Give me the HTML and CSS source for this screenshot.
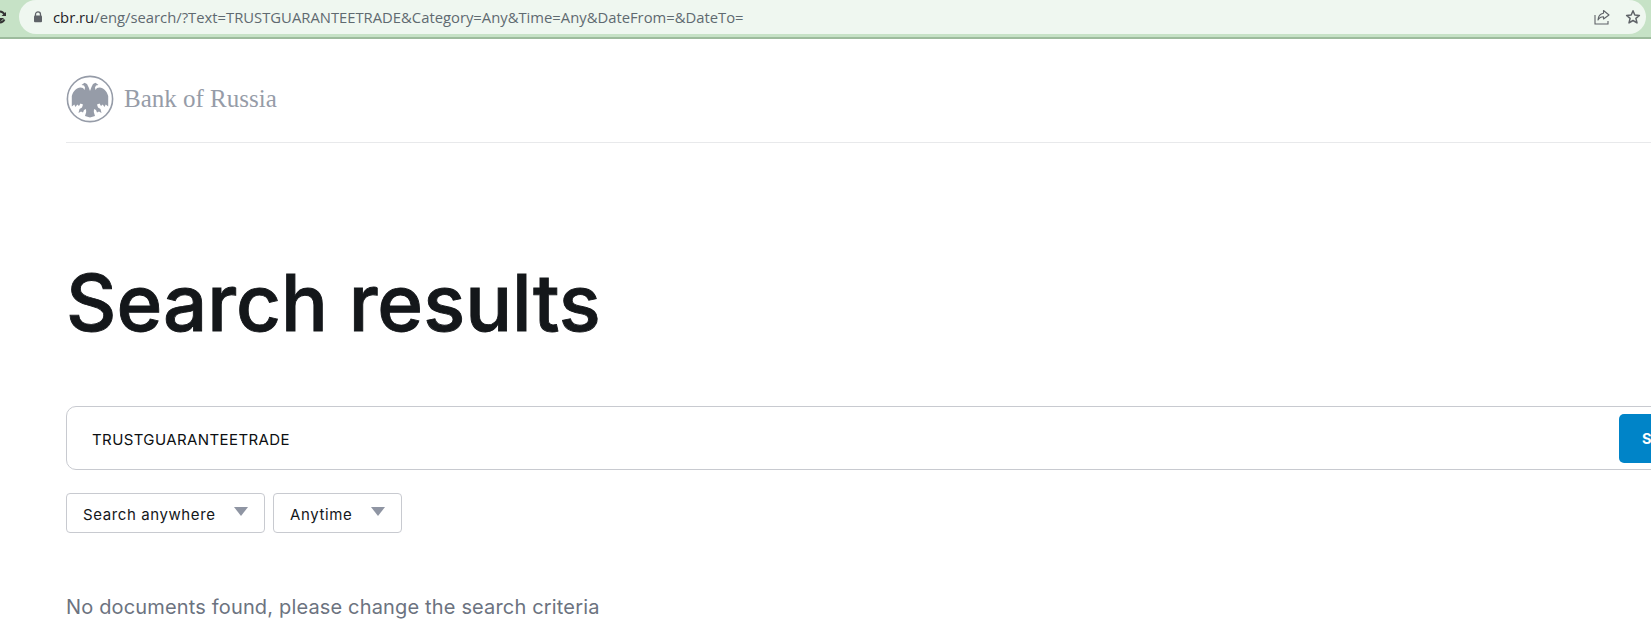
FILE: index.html
```html
<!DOCTYPE html>
<html lang="en">
<head>
  <meta charset="UTF-8">
  <title>Search results</title>
  <link rel="stylesheet" href="styles.css">
</head>
<body>

<div class="browser-bar">
  <svg class="reload-icon" width="6" height="14" viewBox="0 0 6 14">
    <path d="M0 1.5 A5.5 5.5 0 0 1 4.5 4.5 M0 12.5 A5.5 5.5 0 0 0 4.5 9.5" fill="none" stroke="#333" stroke-width="1.8"/>
    <path d="M1.5 6 L6 6 L6 2 Z M0 8 L4 8 L0 12 Z" fill="#333"/>
  </svg>
  <div class="address-pill">
    <svg class="lock-icon" width="10" height="12" viewBox="0 0 10 12">
      <path d="M2.5 5 V3.4 A2.5 2.5 0 0 1 7.5 3.4 V5" fill="none" stroke="#5f6368" stroke-width="1.3"/>
      <rect x="1" y="4.6" width="8" height="6.6" rx="1" fill="#5f6368"/>
    </svg>
    <div class="url"><span class="url-host">cbr.ru</span>/eng/search/?Text=TRUSTGUARANTEETRADE&amp;Category=Any&amp;Time=Any&amp;DateFrom=&amp;DateTo=</div>
    <svg class="share-icon" width="16" height="16" viewBox="0 0 16 16">
      <path d="M1 6 V15 H14 V12" fill="none" stroke="#5f6368" stroke-width="1.1"/>
      <path d="M9.5 1.5 L15 6 L9.5 10 V7.8 C7 7.8 5.2 8.8 4 11 C4.2 7.6 6.2 4.8 9.5 4.3 Z" fill="none" stroke="#5f6368" stroke-width="1.1" stroke-linejoin="round"/>
    </svg>
    <svg class="star-icon" width="16" height="16" viewBox="0 0 16 16">
      <path d="M8 1.8 L9.8 6 L14.4 6.4 L10.9 9.4 L12 13.9 L8 11.5 L4 13.9 L5.1 9.4 L1.6 6.4 L6.2 6 Z" fill="none" stroke="#5f6368" stroke-width="1.5" stroke-linejoin="round"/>
    </svg>
  </div>
</div>

<div class="page">
  <div class="site-header">
    <svg class="logo" width="48" height="48" viewBox="0 0 48 48">
      <circle cx="24" cy="24" r="22.6" fill="none" stroke="#969ca8" stroke-width="1.6"/>
      <path fill="#969ca8" d="M24 16 L22.5 12 L21 9 L18.5 7.8 L15.5 10 L18 10.6 L19 12.5 L18.5 15 L17 13 C12 11 7.5 15 5.8 21 L5.8 31.5 L8.3 29.5 L9.5 32 L11.3 29.5 L13 31 L14.5 28.5 L17 29.5 L16 32.5 L13.5 34 L12.5 38 L15 36.5 L17 37.5 L18 35 L20 34 L20.2 37 L19 41 L24 42.5 L29 41 L27.8 37 L28 34 L30 35 L31 37.5 L33 36.5 L35.5 38 L34.5 34 L32 32.5 L31 29.5 L33.5 28.5 L35 31 L36.7 29.5 L38.5 32 L39.7 29.5 L42.2 31.5 L42.2 21 C40.5 15 36 11 31 13 L29.5 15 L29 12.5 L30 10.6 L32.5 10 L29.5 7.8 L27 9 L25.5 12 Z"/>
    </svg>
    <div class="logo-text">Bank of Russia</div>
  </div>

  <h1 class="page-title">Search results</h1>

  <div class="search-box">
    <div class="search-value">TRUSTGUARANTEETRADE</div>
    <button class="search-btn">S</button>
  </div>

  <div class="filters">
    <div class="filter filter-place"><span class="filter-label">Search anywhere</span><span class="arrow"></span></div>
    <div class="filter filter-time"><span class="filter-label">Anytime</span><span class="arrow"></span></div>
  </div>

  <p class="no-results">No documents found, please change the search criteria</p>
</div>

</body>
</html>
```

FILE: styles.css
```css
body {
  margin: 0;
  width: 1651px;
  height: 642px;
  overflow: hidden;
  background: #fff;
  font-family: Inter, 'Noto Sans', sans-serif;
  color: #14171a;
}

/* browser chrome */
.browser-bar {
  display: flex;
  height: 39px;
  box-sizing: border-box;
  padding-right: 5px;
  background: #c6e2c6;
  border-bottom: 2px solid #9dbb9d;
}

.reload-icon {
  flex: none;
  width: 6px;
  margin: 10px 13px 0 0;
}

.address-pill {
  flex: 1;
  display: flex;
  align-items: center;
  height: 34px;
  padding: 0 5px 0 14px;
  background: #eff7f0;
  border-radius: 17px;
}

.lock-icon {
  flex: none;
  margin-right: 10px;
}

.url {
  flex: 1;
  font-family: 'Open Sans', 'Noto Sans', sans-serif;
  font-size: 14.8px;
  color: #5f6a70;
  white-space: nowrap;
}

.url-host {
  color: #1f2328;
}

.share-icon {
  margin-right: 15px;
}

/* page */
.page {
  width: 1736px;
  box-sizing: border-box;
  padding-left: 66px;
}

.site-header {
  display: flex;
  align-items: center;
  height: 104px;
  box-sizing: border-box;
  padding-top: 17px;
  border-bottom: 1px solid #e8e9eb;
}

.logo {
  flex: none;
  margin-right: 10px;
}

.logo-text {
  font-family: 'Liberation Serif', serif;
  font-size: 25px;
  color: #969ca8;
}

.page-title {
  margin: 111px 0 0;
  font-size: 78px;
  line-height: 97px;
  font-weight: 500;
  -webkit-text-stroke: 0.9px #14171a;
  color: #14171a;
}

.search-box {
  display: flex;
  align-items: center;
  justify-content: space-between;
  height: 64px;
  box-sizing: border-box;
  margin-top: 55px;
  padding: 6px 6px 6px 25px;
  border: 1px solid #c8cad0;
  border-radius: 10px;
}

.search-value {
  padding-top: 2px;
  font-size: 15px;
  letter-spacing: 0.4px;
  color: #0c0f12;
}

.search-btn {
  width: 110px;
  height: 49px;
  padding: 0 0 0 23px;
  border: none;
  border-radius: 5px;
  background: #0084c8;
  color: #fff;
  font-family: inherit;
  font-size: 14.5px;
  font-weight: 700;
  text-align: left;
}

.filters {
  display: flex;
  gap: 8px;
  margin-top: 23px;
}

.filter {
  display: flex;
  align-items: center;
  justify-content: space-between;
  height: 40px;
  box-sizing: border-box;
  padding: 0 16px;
  border: 1px solid #c8cad0;
  border-radius: 4px;
  font-size: 15px;
  letter-spacing: 0.6px;
}

.filter-label {
  padding-top: 2px;
}

.filter-place {
  width: 199px;
}

.filter-time {
  width: 129px;
}

.arrow {
  width: 0;
  height: 0;
  border-left: 7.5px solid transparent;
  border-right: 7.5px solid transparent;
  border-top: 9px solid #8f95a3;
  margin-bottom: 3px;
}

.no-results {
  margin: 61px 0 0;
  font-size: 20px;
  line-height: 26px;
  letter-spacing: 0.16px;
  color: #6c7380;
}
```
